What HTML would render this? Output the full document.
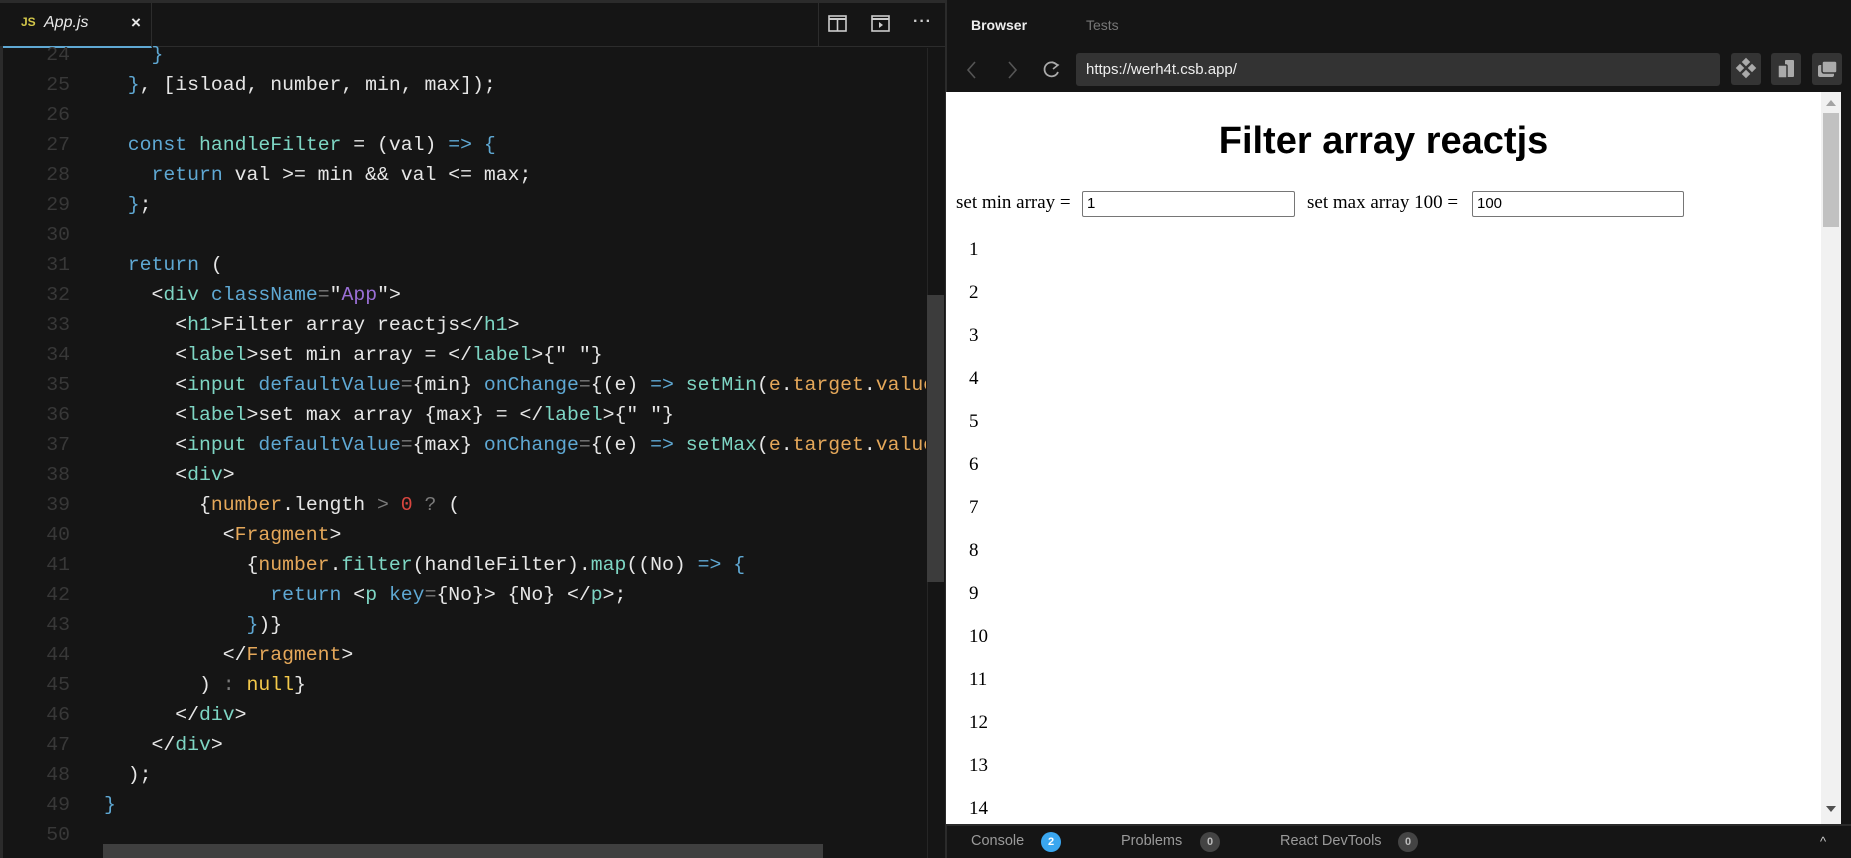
<!DOCTYPE html>
<html><head><meta charset="utf-8"><style>
*{margin:0;padding:0;box-sizing:border-box}
body{width:1851px;height:858px;overflow:hidden;background:#151515;position:relative;font-family:"Liberation Sans",sans-serif}
.abs{position:absolute}
#top{left:0;top:0;width:1851px;height:3px;background:#2b2b2b}
#editor{left:0;top:3px;width:945px;height:855px;background:#151515;border-left:3px solid #2b2b2b}
#tabbar{left:0;top:3px;width:945px;height:44px;border-bottom:1px solid #2c2c2c;background:#151515}
#tab{left:3px;top:3px;width:149px;height:45px;border-right:1px solid #2c2c2c;border-bottom:2px solid #5fa8d3;background:#151515}
.code{font-family:"Liberation Mono",monospace;font-size:19.8px;white-space:pre;color:#e6e6e6}
.ln{position:absolute;left:20px;width:50px;text-align:right;color:#383838}
.cl{position:absolute;left:104px;width:822px;overflow:hidden}
.k{color:#5fa8d3}.f{color:#7ed6c4}.t{color:#7ed6c4}.a{color:#5fa8d3}.s{color:#9a6fd6}.o{color:#e5a85a}.y{color:#f3c94b}.r{color:#d9463f}.g{color:#7a7a7a}.b{color:#5fa8d3}
#browser{left:945px;top:0;width:906px;height:858px;background:#151515;border-left:2px solid #2b2b2b}
#page{left:946px;top:92px;width:895px;height:732px;background:#fff;overflow:hidden;font-family:"Liberation Serif",serif;font-size:19px;color:#000}
.num{position:absolute;left:23px}
.inp{position:absolute;height:26px;border:1px solid #767676;border-radius:2px;font-family:"Liberation Sans",sans-serif;font-size:15px;padding:3px 4px;line-height:18px}
.btn{position:absolute;top:53px;width:30px;height:32px;background:#343434;border-radius:3px}
.bt{position:absolute;top:833px;font-size:14.5px;color:#9a9a9a}
.badge{position:absolute;top:832px;width:20px;height:20px;border-radius:10px;background:#444;color:#bbb;font-size:11px;font-weight:bold;text-align:center;line-height:20px}
</style></head><body>
<div id="top" class="abs"></div>
<div id="editor" class="abs"></div>
<div id="tabbar" class="abs"></div>
<div id="tab" class="abs">
 <span class="abs" style="left:18px;top:12px;font-size:12px;font-weight:bold;color:#d4c84a">JS</span>
 <span class="abs" style="left:41px;top:11px;font-size:16px;font-style:italic;color:#e8e8e8">App.js</span>
 <span class="abs" style="left:128px;top:10px;font-size:17px;font-weight:bold;color:#e8e8e8">×</span>
</div>
<div class="abs" style="left:818px;top:3px;width:1px;height:44px;background:#2c2c2c"></div>
<svg class="abs" style="left:828px;top:15px" width="20" height="18"><rect x="1" y="1" width="17" height="15" fill="none" stroke="#ccc" stroke-width="1.6"/><line x1="1" y1="4" x2="18" y2="4" stroke="#ccc" stroke-width="2"/><line x1="9.5" y1="4" x2="9.5" y2="16" stroke="#ccc" stroke-width="1.6"/></svg>
<svg class="abs" style="left:871px;top:15px" width="20" height="18"><rect x="1" y="1" width="17" height="15" fill="none" stroke="#ccc" stroke-width="1.6"/><line x1="1" y1="4" x2="18" y2="4" stroke="#ccc" stroke-width="2"/><path d="M8 7 L12 10 L8 13Z" fill="#ccc"/></svg>
<div class="abs" style="left:913px;top:13px;color:#ccc;font-size:16px;font-weight:bold;letter-spacing:1px">···</div>

<div class="code">
<div class="ln" style="top:44px">24</div><div class="cl" style="top:44px">    <span class="b">}</span></div>
<div class="ln" style="top:74px">25</div><div class="cl" style="top:74px">  <span class="b">}</span>, [isload, number, min, max]);</div>
<div class="ln" style="top:104px">26</div>
<div class="ln" style="top:134px">27</div><div class="cl" style="top:134px">  <span class="k">const</span> <span class="f">handleFilter</span> = (val) <span class="b">=&gt; {</span></div>
<div class="ln" style="top:164px">28</div><div class="cl" style="top:164px">    <span class="k">return</span> val &gt;= min &amp;&amp; val &lt;= max;</div>
<div class="ln" style="top:194px">29</div><div class="cl" style="top:194px">  <span class="b">}</span>;</div>
<div class="ln" style="top:224px">30</div>
<div class="ln" style="top:254px">31</div><div class="cl" style="top:254px">  <span class="k">return</span> (</div>
<div class="ln" style="top:284px">32</div><div class="cl" style="top:284px">    &lt;<span class="t">div</span> <span class="a">className</span><span class="g">=</span>"<span class="s">App</span>"&gt;</div>
<div class="ln" style="top:314px">33</div><div class="cl" style="top:314px">      &lt;<span class="t">h1</span>&gt;Filter array reactjs&lt;/<span class="t">h1</span>&gt;</div>
<div class="ln" style="top:344px">34</div><div class="cl" style="top:344px">      &lt;<span class="t">label</span>&gt;set min array = &lt;/<span class="t">label</span>&gt;{" "}</div>
<div class="ln" style="top:374px">35</div><div class="cl" style="top:374px">      &lt;<span class="t">input</span> <span class="a">defaultValue</span><span class="g">=</span>{min} <span class="a">onChange</span><span class="g">=</span>{(e) <span class="b">=&gt;</span> <span class="f">setMin</span>(<span class="o">e</span>.<span class="o">target</span>.<span class="o">value</span></div>
<div class="ln" style="top:404px">36</div><div class="cl" style="top:404px">      &lt;<span class="t">label</span>&gt;set max array {max} = &lt;/<span class="t">label</span>&gt;{" "}</div>
<div class="ln" style="top:434px">37</div><div class="cl" style="top:434px">      &lt;<span class="t">input</span> <span class="a">defaultValue</span><span class="g">=</span>{max} <span class="a">onChange</span><span class="g">=</span>{(e) <span class="b">=&gt;</span> <span class="f">setMax</span>(<span class="o">e</span>.<span class="o">target</span>.<span class="o">value</span></div>
<div class="ln" style="top:464px">38</div><div class="cl" style="top:464px">      &lt;<span class="t">div</span>&gt;</div>
<div class="ln" style="top:494px">39</div><div class="cl" style="top:494px">        {<span class="o">number</span>.length <span class="g">&gt;</span> <span class="r">0</span> <span class="g">?</span> (</div>
<div class="ln" style="top:524px">40</div><div class="cl" style="top:524px">          &lt;<span class="o">Fragment</span>&gt;</div>
<div class="ln" style="top:554px">41</div><div class="cl" style="top:554px">            {<span class="o">number</span>.<span class="f">filter</span>(handleFilter).<span class="f">map</span>((No) <span class="b">=&gt; {</span></div>
<div class="ln" style="top:584px">42</div><div class="cl" style="top:584px">              <span class="k">return</span> &lt;<span class="t">p</span> <span class="a">key</span><span class="g">=</span>{No}&gt; {No} &lt;/<span class="t">p</span>&gt;;</div>
<div class="ln" style="top:614px">43</div><div class="cl" style="top:614px">            <span class="b">}</span>)}</div>
<div class="ln" style="top:644px">44</div><div class="cl" style="top:644px">          &lt;/<span class="o">Fragment</span>&gt;</div>
<div class="ln" style="top:674px">45</div><div class="cl" style="top:674px">        ) <span class="g">:</span> <span class="y">null</span>}</div>
<div class="ln" style="top:704px">46</div><div class="cl" style="top:704px">      &lt;/<span class="t">div</span>&gt;</div>
<div class="ln" style="top:734px">47</div><div class="cl" style="top:734px">    &lt;/<span class="t">div</span>&gt;</div>
<div class="ln" style="top:764px">48</div><div class="cl" style="top:764px">  );</div>
<div class="ln" style="top:794px">49</div><div class="cl" style="top:794px"><span class="b">}</span></div>
<div class="ln" style="top:824px">50</div>
</div>
<div class="abs" style="left:927px;top:48px;width:1px;height:810px;background:#262626"></div>
<div class="abs" style="left:927px;top:295px;width:17px;height:287px;background:#3c3c3c"></div>
<div class="abs" style="left:103px;top:844px;width:720px;height:14px;background:#3f3f3f"></div>

<div id="browser" class="abs"></div>
<div class="abs" style="left:971px;top:17px;font-size:14px;font-weight:bold;color:#eee">Browser</div>
<div class="abs" style="left:1086px;top:17px;font-size:14px;color:#777">Tests</div>
<svg class="abs" style="left:963px;top:59px" width="110" height="22"><path d="M12 3 L5 11 L12 19" fill="none" stroke="#555" stroke-width="1.6"/><path d="M46 3 L53 11 L46 19" fill="none" stroke="#555" stroke-width="1.6"/><path d="M94 6 A7 7 0 1 0 95 13" fill="none" stroke="#aaa" stroke-width="1.8"/><path d="M89 3 L95 6 L90 10" fill="none" stroke="#aaa" stroke-width="1.6"/></svg>
<div class="abs" style="left:1076px;top:53px;width:644px;height:33px;background:#333;border-radius:3px;color:#eee;font-size:15px;padding:8px 10px">https://werh4t.csb.app/</div>
<div class="btn" style="left:1731px"><svg width="30" height="32"><g fill="#aaa"><rect x="12" y="6" width="6" height="6" transform="rotate(45 15 9)"/><rect x="6" y="12" width="6" height="6" transform="rotate(45 9 15)"/><rect x="18" y="12" width="6" height="6" transform="rotate(45 21 15)"/><rect x="12" y="18" width="6" height="6" transform="rotate(45 15 21)"/></g></svg></div>
<div class="btn" style="left:1771px"><svg width="30" height="32"><rect x="14" y="7" width="9" height="17" rx="1" fill="#aaa"/><rect x="7" y="12" width="9" height="13" rx="1" fill="#aaa" stroke="#343434" stroke-width="1.5"/></svg></div>
<div class="btn" style="left:1812px"><svg width="30" height="32"><rect x="6" y="12" width="16" height="12" rx="2" fill="#aaa"/><rect x="10" y="8" width="15" height="12" rx="2" fill="#aaa" stroke="#343434" stroke-width="1.5"/></svg></div>

<div id="page" class="abs">
 <div class="abs" style="left:0;top:28px;width:875px;text-align:center;font-family:'Liberation Sans',sans-serif;font-weight:bold;font-size:38px">Filter array reactjs</div>
 <div class="abs" style="left:10px;top:100px">set min array =</div>
 <div class="inp" style="left:136px;top:99px;width:213px">1</div>
 <div class="abs" style="left:361px;top:100px">set max array 100 =</div>
 <div class="inp" style="left:526px;top:99px;width:212px">100</div>
 <div class="num" style="top:147px">1</div>
 <div class="num" style="top:190px">2</div>
 <div class="num" style="top:233px">3</div>
 <div class="num" style="top:276px">4</div>
 <div class="num" style="top:319px">5</div>
 <div class="num" style="top:362px">6</div>
 <div class="num" style="top:405px">7</div>
 <div class="num" style="top:448px">8</div>
 <div class="num" style="top:491px">9</div>
 <div class="num" style="top:534px">10</div>
 <div class="num" style="top:577px">11</div>
 <div class="num" style="top:620px">12</div>
 <div class="num" style="top:663px">13</div>
 <div class="num" style="top:706px">14</div>
 <div class="abs" style="left:875px;top:0;width:20px;height:732px;background:#f1f1f1"></div>
 <div class="abs" style="left:877px;top:21px;width:16px;height:114px;background:#c1c1c1"></div>
 <div class="abs" style="left:880px;top:8px;width:0;height:0;border-left:5px solid transparent;border-right:5px solid transparent;border-bottom:6px solid #a3a3a3"></div>
 <div class="abs" style="left:880px;top:714px;width:0;height:0;border-left:5px solid transparent;border-right:5px solid transparent;border-top:6px solid #505050"></div>
</div>
<div class="abs" style="left:946px;top:824px;width:905px;height:2px;background:#2b2b2b"></div>
<div class="bt" style="left:971px">Console</div>
<div class="badge" style="left:1041px;background:#3aa7f0;color:#fff">2</div>
<div class="bt" style="left:1121px">Problems</div>
<div class="badge" style="left:1200px">0</div>
<div class="bt" style="left:1280px">React DevTools</div>
<div class="badge" style="left:1398px">0</div>
<div class="abs" style="left:1820px;top:834px;color:#ccc;font-size:13px">^</div>
</body></html>
